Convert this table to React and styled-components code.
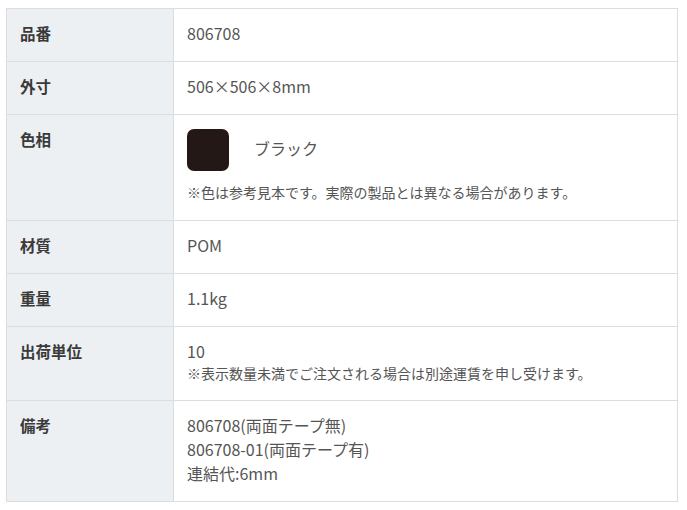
import styled, { createGlobalStyle } from 'styled-components';

const GlobalStyle = createGlobalStyle`
  body {
    margin: 0;
    background: #fff;
    font-family: "Noto Sans CJK JP", "Noto Sans", sans-serif;
  }
`;

const Page = styled.div`
  padding: 8px 0 0 6px;
`;

const SpecTable = styled.table`
  width: 672px;
  border-collapse: collapse;
  border: 1px solid #dddddd;
`;

const Row = styled.tr`
  border-bottom: 1px solid #dddddd;
`;

const Label = styled.th`
  width: 140px;
  padding: 12px 13px 16px;
  background: #edf0f3;
  border-right: 1px solid #dddddd;
  text-align: left;
  vertical-align: top;
  font-size: 15.5px;
  line-height: 24px;
  font-weight: 700;
  color: #3a3a3a;
`;

const Value = styled.td`
  padding: 12px 13px 16px;
  vertical-align: top;
  font-size: 16px;
  line-height: 24px;
  color: #555;
`;

const Note = styled.div`
  font-size: 14px;
  line-height: ${(p) => p.$lh || '21px'};
  margin-top: ${(p) => p.$mt || '0'};
  color: #555;
`;

const ColorItem = styled.div`
  display: flex;
  align-items: center;
  gap: 25px;
  margin-top: 2px;
`;

const Swatch = styled.div`
  width: 42px;
  height: 42px;
  border-radius: 7px;
  background: ${(p) => p.$color};
`;

const ColorName = styled.span`
  font-size: 16px;
  margin-top: -4px;
`;

function App() {
  return (
    <Page>
      <GlobalStyle />
      <SpecTable>
        <tbody>
          <Row>
            <Label>品番</Label>
            <Value>806708</Value>
          </Row>
          <Row>
            <Label>外寸</Label>
            <Value>506×506×8mm</Value>
          </Row>
          <Row>
            <Label>色相</Label>
            <Value>
              <ColorItem>
                <Swatch $color="#231815" />
                <ColorName>ブラック</ColorName>
              </ColorItem>
              <Note $mt="10px" $lh="23px">※色は参考見本です。実際の製品とは異なる場合があります。</Note>
            </Value>
          </Row>
          <Row>
            <Label>材質</Label>
            <Value>POM</Value>
          </Row>
          <Row>
            <Label>重量</Label>
            <Value>1.1kg</Value>
          </Row>
          <Row>
            <Label>出荷単位</Label>
            <Value>
              10
              <Note>※表示数量未満でご注文される場合は別途運賃を申し受けます。</Note>
            </Value>
          </Row>
          <Row>
            <Label>備考</Label>
            <Value>
              806708(両面テープ無)
              <br />
              806708-01(両面テープ有)
              <br />
              連結代:6mm
            </Value>
          </Row>
        </tbody>
      </SpecTable>
    </Page>
  );
}

export default App;
